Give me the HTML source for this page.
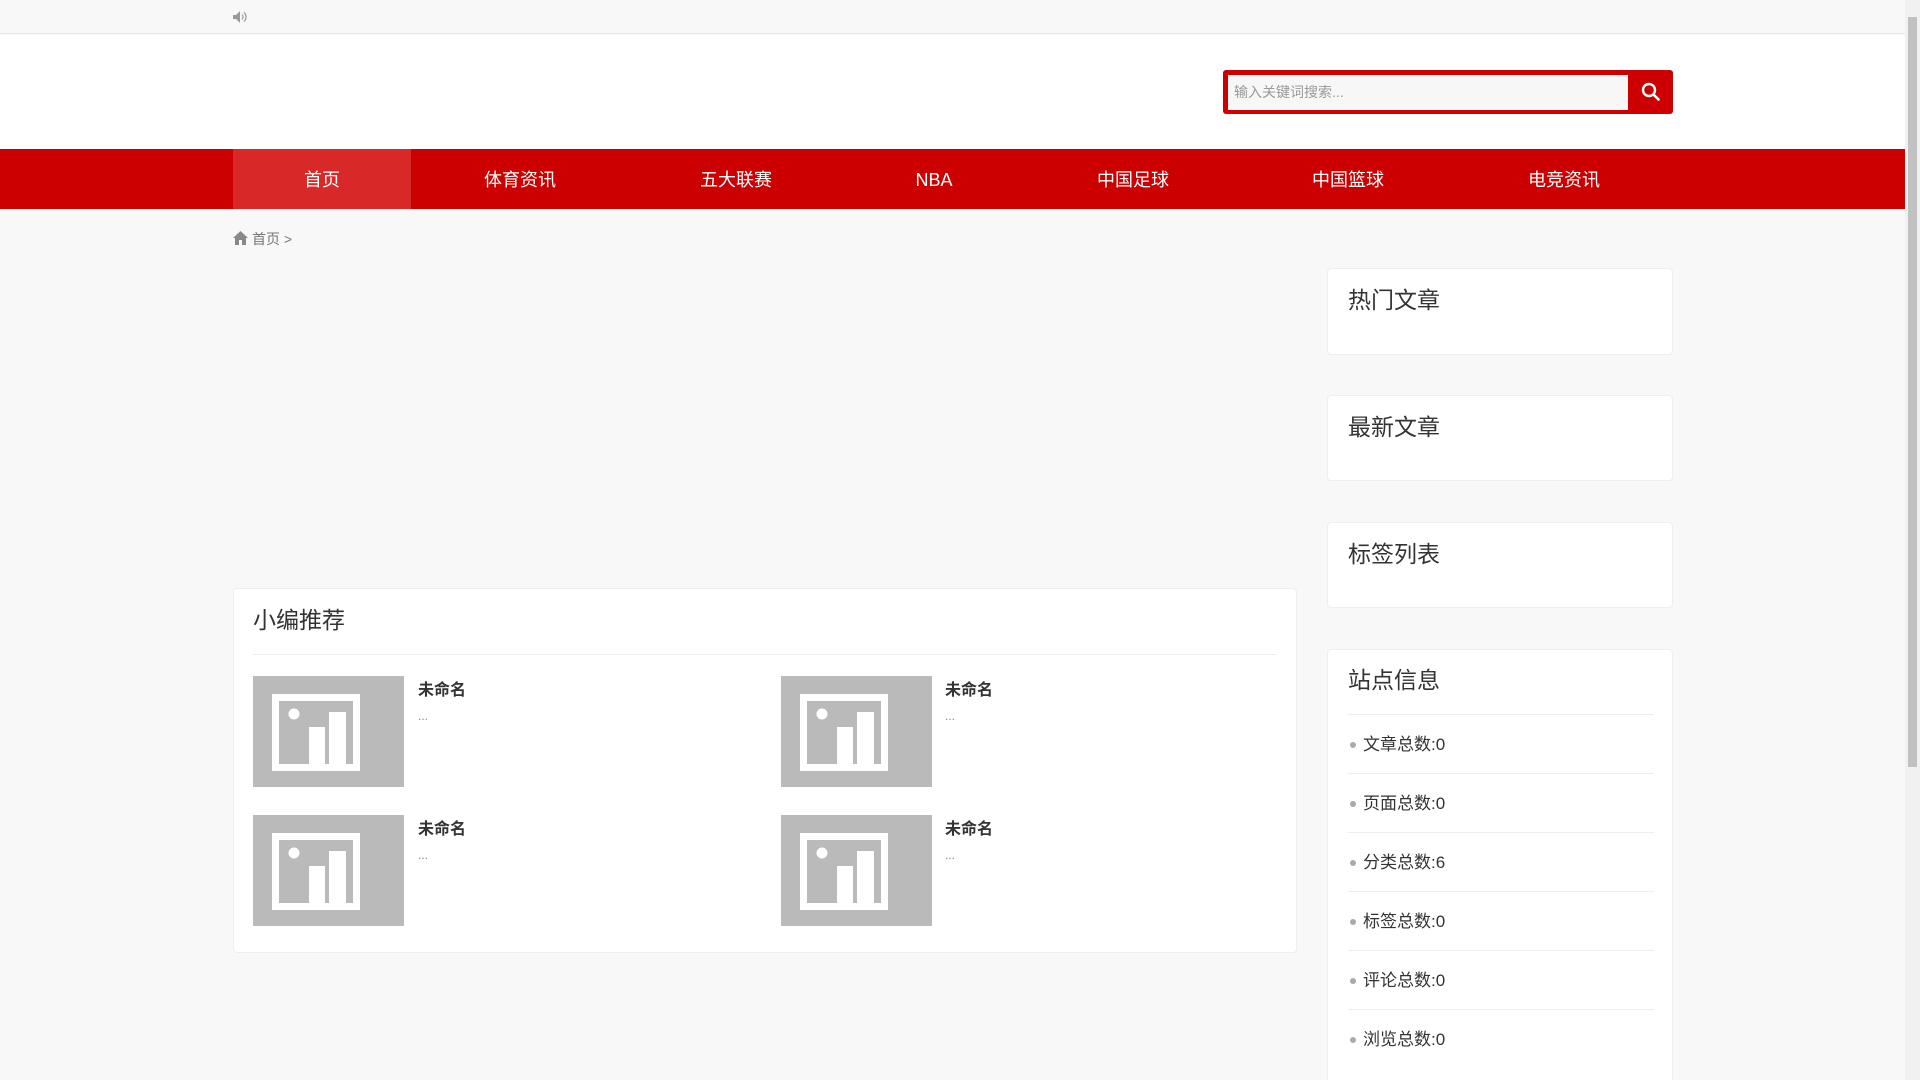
<!DOCTYPE html>
<html><head><meta charset="utf-8"><style>
*{margin:0;padding:0;box-sizing:border-box}
html,body{width:1920px;height:1080px;overflow:hidden}
body{background:#f8f8f8;font-family:"Liberation Sans","Noto Sans CJK SC",sans-serif;color:#333;position:relative}
.a{position:absolute}
.top{left:0;top:0;width:1905px;height:34px;background:#f8f8f8;border-bottom:1px solid #e8e8e8}
.head{left:0;top:35px;width:1905px;height:114px;background:#fff}
.nav{left:0;top:149px;width:1905px;height:60px;background:#cc0000}
.nav span{position:absolute;top:1px;line-height:60px;color:#fff;font-size:18px;transform:translateX(-50%)}
.card{background:#fff;border:1px solid #eee;border-radius:4px}
.ttl{font-size:23px;color:#333}
.img{width:151px;height:111px;background:#bababa}
.nm{font-size:16px;font-weight:bold;color:#333}
.dots{font-size:12px;color:#888}
.li{left:1348px;width:306px;height:59px;border-top:1px solid #eee;font-size:17px;color:#333;line-height:60px;padding-left:15px}
.li:before{content:"";position:absolute;left:2px;top:27px;width:6px;height:6px;border-radius:50%;background:#aaa}
.sb{left:1905px;top:0;width:15px;height:1080px;background:#f1f1f1}
</style></head><body>
<div class="a top"></div>
<svg class="a" style="left:233px;top:11px" width="16" height="12" viewBox="0 0 16 12"><path d="M0 4h3l4-4v12l-4-4H0z" fill="#999"/><path d="M9 3.5a3.5 3.5 0 0 1 0 5M11 1.5a6 6 0 0 1 0 9" stroke="#999" stroke-width="1.2" fill="none"/></svg>
<div class="a head"></div>
<div class="a" style="left:1223px;top:70px;width:450px;height:44px;background:#cc0000;border-radius:3px"></div>
<div class="a" style="left:1228px;top:75px;width:400px;height:35px;background:#f7f7f7;font-size:14px;color:#999;line-height:35px;padding-left:6px">输入关键词搜索...</div>
<svg class="a" style="left:1641px;top:82px" width="20" height="20" viewBox="0 0 20 20"><circle cx="8" cy="8" r="6" stroke="#fff" stroke-width="2.4" fill="none"/><path d="M12.5 12.5l5 5" stroke="#fff" stroke-width="2.6" stroke-linecap="round"/></svg>
<div class="a nav">
<div class="a" style="left:233px;top:0;width:178px;height:60px;background:#d92828"></div>
<span style="left:322px">首页</span><span style="left:520px">体育资讯</span><span style="left:736px">五大联赛</span><span style="left:934px">NBA</span><span style="left:1133px">中国足球</span><span style="left:1348px">中国篮球</span><span style="left:1564px">电竞资讯</span>
</div>
<svg class="a" style="left:233px;top:231px" width="15" height="14" viewBox="0 0 15 14"><path d="M7.5 0L0 7h2v7h4V9h3v5h4V7h2z" fill="#888"/></svg>
<div class="a" style="left:252px;top:229px;font-size:14px;color:#777">首页 &gt;</div>

<div class="a card" style="left:233px;top:588px;width:1064px;height:365px"></div>
<div class="a ttl" style="left:253px;top:601px">小编推荐</div>
<div class="a" style="left:253px;top:654px;width:1024px;height:1px;background:#eee"></div>
<div class="a img" style="left:253px;top:676px"></div><div class="a img" style="left:781px;top:676px"></div>
<div class="a img" style="left:253px;top:815px"></div><div class="a img" style="left:781px;top:815px"></div>
<svg class="a" style="left:272px;top:694px" width="110" height="80"><rect x="3.5" y="3.5" width="81" height="70" fill="none" stroke="#fff" stroke-width="7"/><circle cx="22" cy="20" r="5.5" fill="#fff"/><rect x="37" y="33" width="16" height="40" fill="#fff"/><rect x="57" y="18" width="17" height="55" fill="#fff"/></svg>
<svg class="a" style="left:800px;top:694px" width="110" height="80"><rect x="3.5" y="3.5" width="81" height="70" fill="none" stroke="#fff" stroke-width="7"/><circle cx="22" cy="20" r="5.5" fill="#fff"/><rect x="37" y="33" width="16" height="40" fill="#fff"/><rect x="57" y="18" width="17" height="55" fill="#fff"/></svg>
<svg class="a" style="left:272px;top:833px" width="110" height="80"><rect x="3.5" y="3.5" width="81" height="70" fill="none" stroke="#fff" stroke-width="7"/><circle cx="22" cy="20" r="5.5" fill="#fff"/><rect x="37" y="33" width="16" height="40" fill="#fff"/><rect x="57" y="18" width="17" height="55" fill="#fff"/></svg>
<svg class="a" style="left:800px;top:833px" width="110" height="80"><rect x="3.5" y="3.5" width="81" height="70" fill="none" stroke="#fff" stroke-width="7"/><circle cx="22" cy="20" r="5.5" fill="#fff"/><rect x="37" y="33" width="16" height="40" fill="#fff"/><rect x="57" y="18" width="17" height="55" fill="#fff"/></svg>
<div class="a nm" style="left:418px;top:676px">未命名</div><div class="a dots" style="left:418px;top:709px">...</div>
<div class="a nm" style="left:945px;top:676px">未命名</div><div class="a dots" style="left:945px;top:709px">...</div>
<div class="a nm" style="left:418px;top:815px">未命名</div><div class="a dots" style="left:418px;top:848px">...</div>
<div class="a nm" style="left:945px;top:815px">未命名</div><div class="a dots" style="left:945px;top:848px">...</div>

<div class="a card" style="left:1327px;top:268px;width:346px;height:87px"></div>
<div class="a ttl" style="left:1348px;top:281px">热门文章</div>
<div class="a card" style="left:1327px;top:395px;width:346px;height:86px"></div>
<div class="a ttl" style="left:1348px;top:408px">最新文章</div>
<div class="a card" style="left:1327px;top:522px;width:346px;height:86px"></div>
<div class="a ttl" style="left:1348px;top:535px">标签列表</div>
<div class="a card" style="left:1327px;top:649px;width:346px;height:450px"></div>
<div class="a ttl" style="left:1348px;top:661px">站点信息</div>
<div class="a li" style="top:714px">文章总数:0</div>
<div class="a li" style="top:773px">页面总数:0</div>
<div class="a li" style="top:832px">分类总数:6</div>
<div class="a li" style="top:891px">标签总数:0</div>
<div class="a li" style="top:950px">评论总数:0</div>
<div class="a li" style="top:1009px">浏览总数:0</div>
<div class="a sb"><div style="position:absolute;left:3px;top:17px;width:9px;height:750px;background:#c1c1c1"></div></div>
</body></html>
